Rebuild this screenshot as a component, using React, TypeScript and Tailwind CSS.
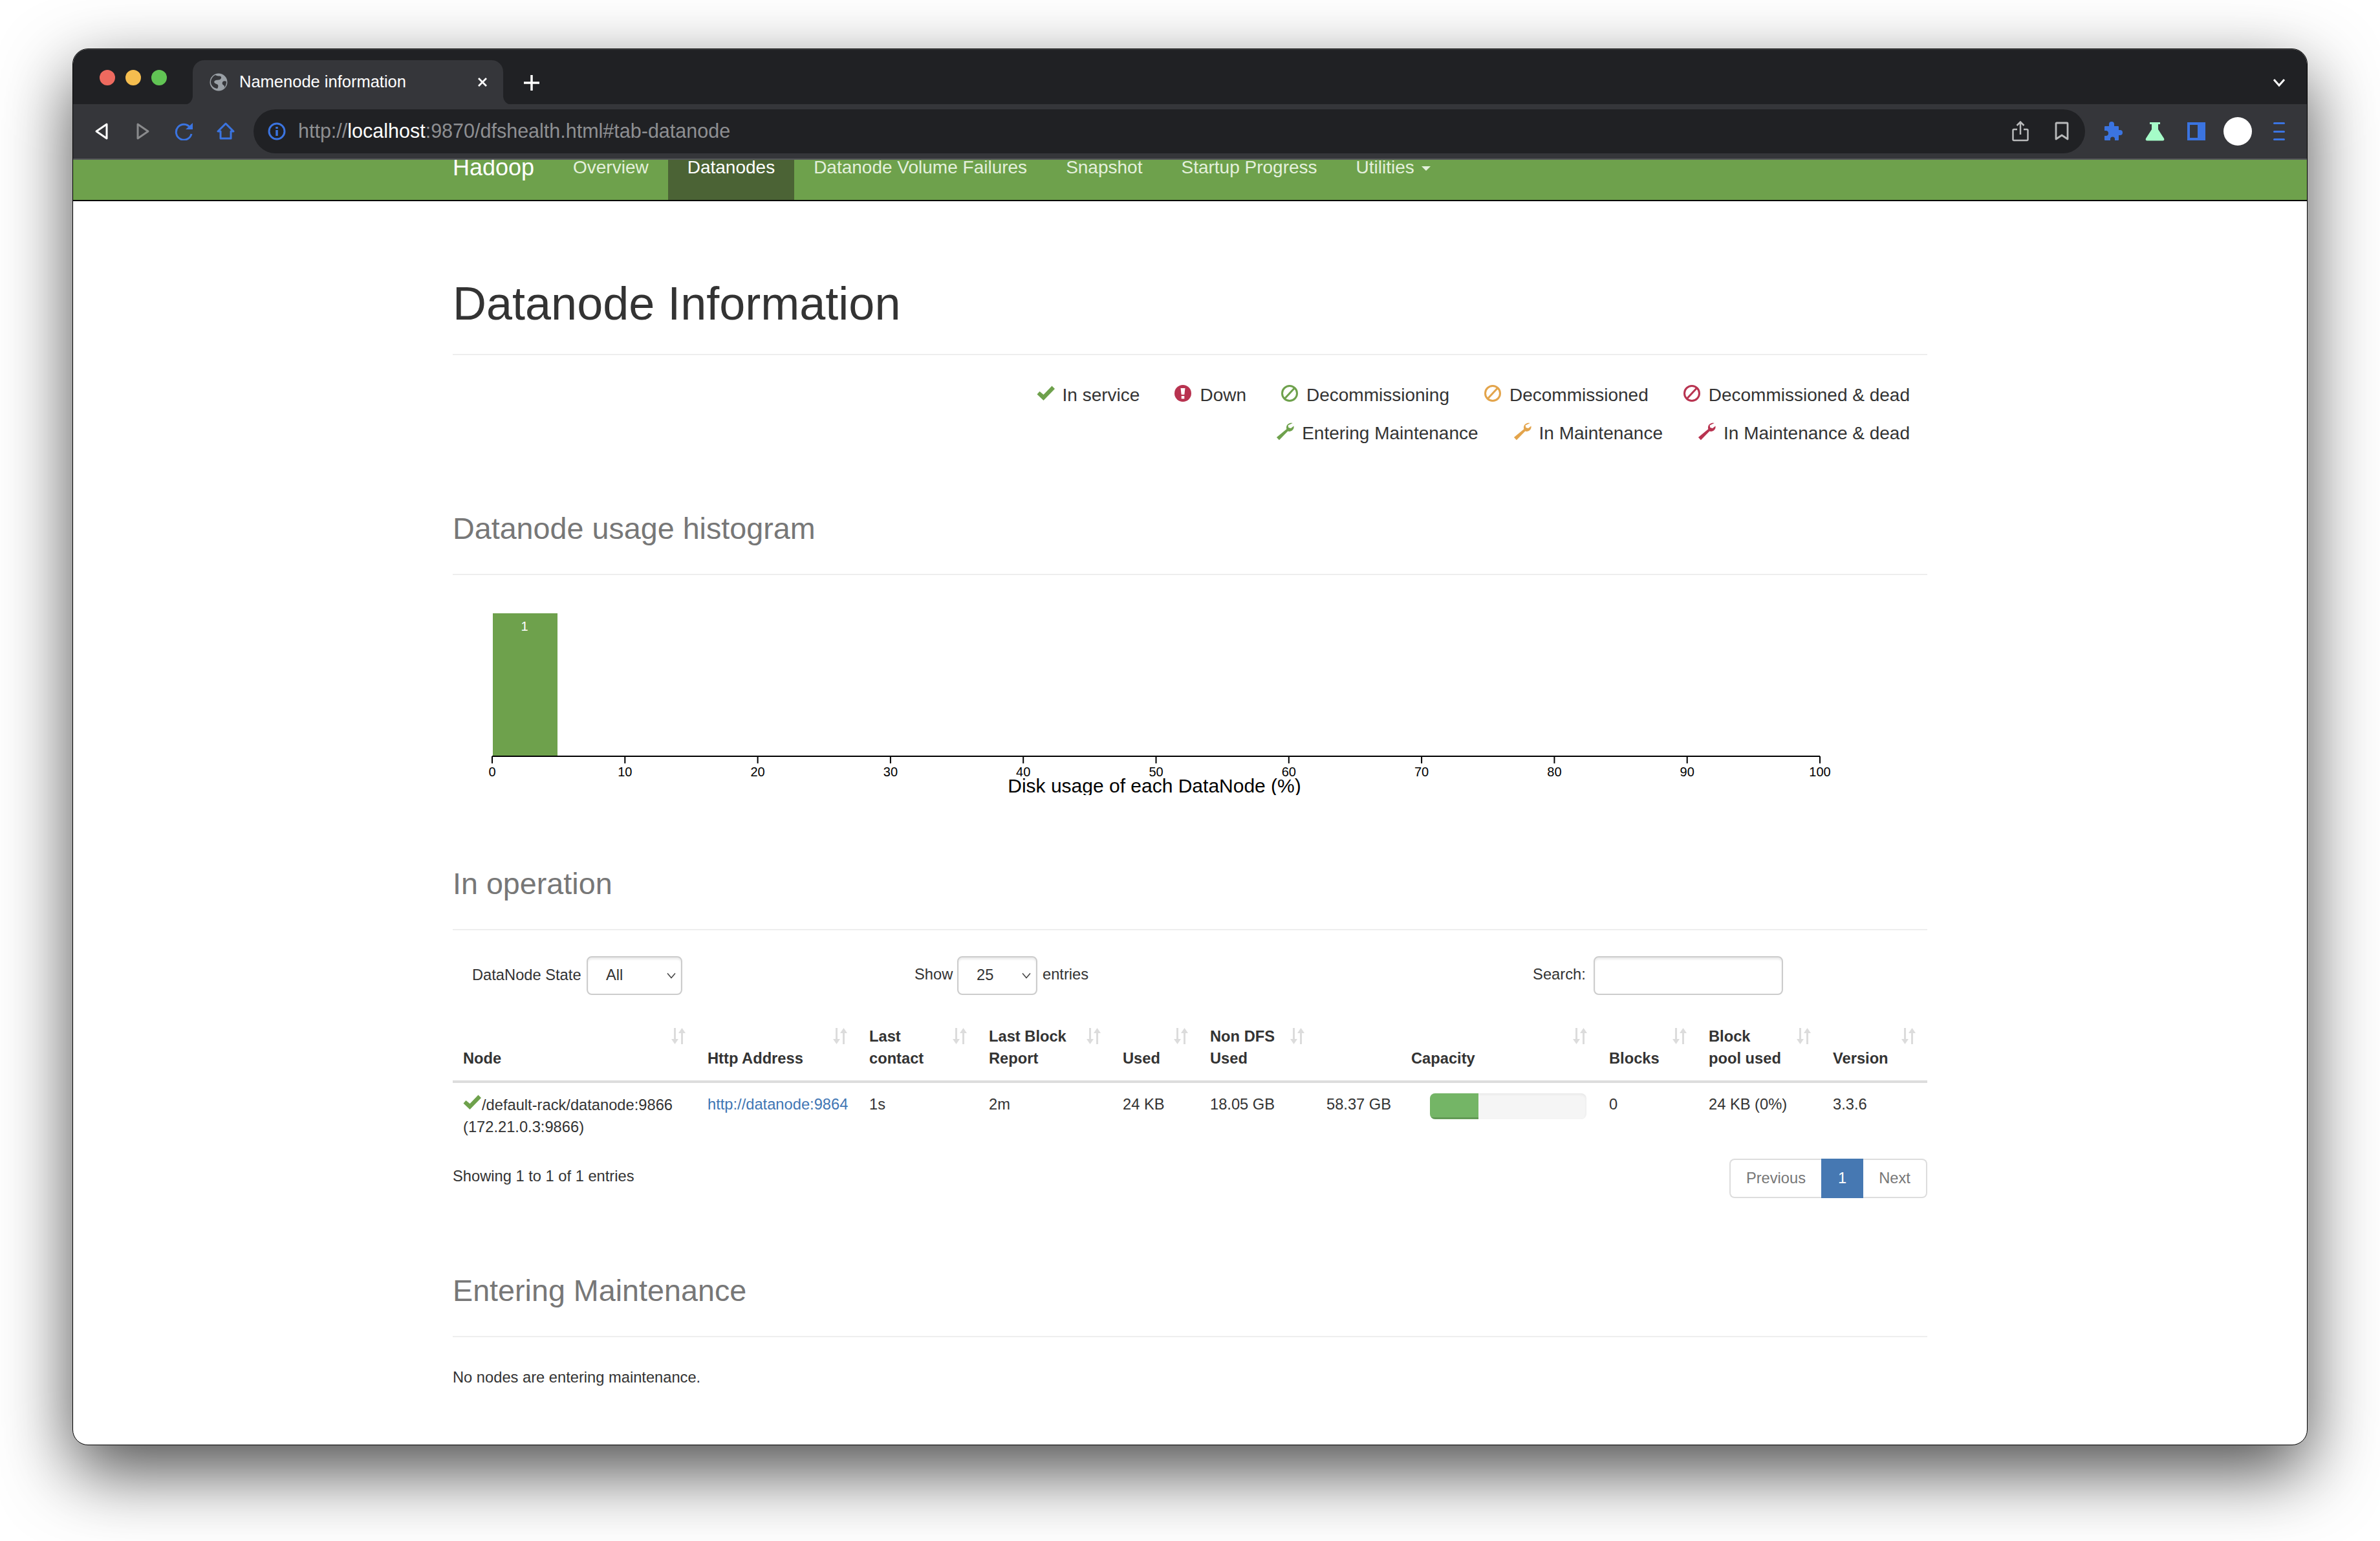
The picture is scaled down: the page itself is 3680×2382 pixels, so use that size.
import type { ReactNode } from 'react';

const GREEN = '#6ea14c';
const ORANGE = '#e3a44b';
const RED = '#b83350';

function Check({ color = GREEN, size = 28 }: { color?: string; size?: number }) {
  return (
    <svg width={size} height={size} viewBox="0 0 28 24" className="shrink-0">
      <path d="M.5 13.500 4.500 9 10.500 14 23.500.5 28 5 10.500 23z" fill={color} />
    </svg>
  );
}

function Exclamation({ color }: { color: string }) {
  return (
    <svg width="28" height="28" viewBox="0 0 28 28" className="shrink-0">
      <circle cx="14" cy="14" r="13" fill={color} />
      <path d="M10.500 6h7l-1.200 10h-4.600z" fill="#fff" />
      <rect x="11.700" y="18" width="4.600" height="4.400" fill="#fff" />
    </svg>
  );
}

function Ban({ color }: { color: string }) {
  return (
    <svg width="28" height="28" viewBox="0 0 28 28" className="shrink-0">
      <circle cx="14" cy="14" r="11.500" fill="none" stroke={color} strokeWidth="3" />
      <path d="M21 6.500 7 21.500" stroke={color} strokeWidth="3" />
    </svg>
  );
}

function Wrench({ color }: { color: string }) {
  return (
    <svg width="28" height="28" viewBox="0 0 24 24" className="shrink-0">
      <path
        d="M22 .8c-3.800-.9-7.600 1.300-8.200 5-.2 1-.1 2 .2 2.900L.8 19.800 4.200 23.400 15.700 11.600c3.300 1.100 7-.9 7.800-4.300.2-.9.2-1.800 0-2.600l-3.800 3-3.100-.9-.7-3z"
        fill={color}
      />
    </svg>
  );
}

function SortArrows() {
  return (
    <svg width="24" height="25" viewBox="0 0 24 25" className="absolute top-[20px] right-[17px]">
      <path d="M5 0h3v17h4l-5.500 8L1 17h4z" fill="#dcdcdc" />
      <path d="M16 25h3V8h4L17.500 0 12 8h4z" fill="#dcdcdc" />
    </svg>
  );
}

function Chevron() {
  return (
    <svg width="14" height="10" viewBox="0 0 14 10" className="shrink-0">
      <path d="M1 1.500 7 8.500 13 1.500" fill="none" stroke="#444" strokeWidth="1.500" />
    </svg>
  );
}

function Cell({ children }: { children: ReactNode }) {
  return <div className="flex h-[64px] w-[64px] shrink-0 items-center justify-center">{children}</div>;
}

function TrafficLights() {
  return (
    <div className="mt-[31px] flex gap-[16px] pl-[41px]">
      <div className="h-[24px] w-[24px] rounded-full bg-[#ee6a5f]" />
      <div className="h-[24px] w-[24px] rounded-full bg-[#f5bd4f]" />
      <div className="h-[24px] w-[24px] rounded-full bg-[#61c454]" />
    </div>
  );
}

function BrowserTab() {
  return (
    <div className="relative mt-[16px] ml-[40px] flex h-[69px] w-[480px] items-center rounded-t-[18px] bg-[#35363a] pb-[2px] pl-[26px] text-[25.500px] text-white">
      <svg width="28" height="28" viewBox="0 0 28 28" className="absolute bottom-0 -left-[14px]">
        <path d="M14 14C14 21 9 28 0 28H14z" fill="#35363a" />
      </svg>
      <svg width="28" height="28" viewBox="0 0 28 28" className="absolute -right-[14px] bottom-0">
        <path d="M14 14C14 21 19 28 28 28H14z" fill="#35363a" />
      </svg>
      <svg width="28" height="28" viewBox="0 0 28 28" className="shrink-0">
        <circle cx="14" cy="14" r="13.500" fill="#9aa0a6" />
        <path
          d="M9 3c3 2 6 1 8 2s1 4-1 5-6 0-8 2 0 4 3 5 3 4 1 7c-6-1-10-5-10-10 0-5 3-9 7-11zM26 13c-2-1-5-1-6 1s0 4 2 5 1 4-1 5c3-2 5-6 5-11z"
          fill="#35363a"
        />
      </svg>
      <span className="ml-[18px]">Namenode information</span>
      <svg width="16" height="16" viewBox="0 0 16 16" className="absolute top-[26px] right-[24px]">
        <path d="M2 2 14 14M14 2 2 14" stroke="#fff" strokeWidth="2.800" />
      </svg>
    </div>
  );
}

function TabStrip() {
  return (
    <div className="flex h-[85px] shrink-0 items-start border-t border-[#47484b] bg-[#202124]">
      <TrafficLights />
      <BrowserTab />
      <svg width="26" height="26" viewBox="0 0 26 26" className="mt-[38px] ml-[31px]">
        <path d="M13 1v24M1 13h24" stroke="#fff" strokeWidth="3.500" />
      </svg>
      <svg width="20" height="14" viewBox="0 0 20 14" className="mt-[44px] mr-[33px] ml-auto">
        <path d="M2 2 10 11 18 2" fill="none" stroke="#fff" strokeWidth="3" />
      </svg>
    </div>
  );
}

function Toolbar() {
  return (
    <div className="flex h-[86px] shrink-0 items-center border-b-[2px] border-[#55565a] bg-[#35363a] pr-[11px] pl-[12px]">
      <Cell>
        <svg width="22" height="28" viewBox="0 0 22 28">
          <path d="M19 3 3 14l16 11z" fill="none" stroke="#fff" strokeWidth="3" strokeLinejoin="round" />
        </svg>
      </Cell>
      <Cell>
        <svg width="22" height="28" viewBox="0 0 22 28">
          <path d="M3 3 19 14 3 25z" fill="none" stroke="#8a8b8d" strokeWidth="3" strokeLinejoin="round" />
        </svg>
      </Cell>
      <Cell>
        <svg width="30" height="28" viewBox="0 0 30 28">
          <path d="M24 8a12 12 0 1 0 2 10" fill="none" stroke="#3b74e0" strokeWidth="3" />
          <path d="M17 11h11V1z" fill="#3b74e0" />
        </svg>
      </Cell>
      <Cell>
        <svg width="28" height="28" viewBox="0 0 28 28">
          <path d="M14 2 2 14h4v11h16V14h4z" fill="none" stroke="#3b74e0" strokeWidth="3" strokeLinejoin="round" />
        </svg>
      </Cell>
      <div className="ml-[11px] flex h-[68px] min-w-0 flex-1 items-center rounded-full bg-[#202124] pl-[22px] text-[30.500px] text-[#8e8f92]">
        <svg width="28" height="28" viewBox="0 0 28 28" className="shrink-0">
          <circle cx="14" cy="14" r="12" fill="none" stroke="#3b74e0" strokeWidth="3" />
          <path d="M14 12v9M14 7v3" stroke="#3b74e0" strokeWidth="3.500" />
        </svg>
        <span className="ml-[19px]">
          http://<span className="text-white">localhost</span>:9870/dfshealth.html#tab-datanode
        </span>
        <div className="mr-[4px] ml-auto flex">
          <Cell>
            <svg width="26" height="32" viewBox="0 0 26 32">
              <path
                d="M8 13H3a1.500 1.500 0 0 0-1.500 1.500v14A1.500 1.500 0 0 0 3 30h20a1.500 1.500 0 0 0 1.500-1.500v-14A1.500 1.500 0 0 0 23 13h-5M13 21V2M7.500 7 13 1.500 18.500 7"
                fill="none"
                stroke="#b9babb"
                strokeWidth="2.500"
              />
            </svg>
          </Cell>
          <Cell>
            <svg width="22" height="30" viewBox="0 0 22 30">
              <path
                d="M3 2h16a1 1 0 0 1 1 1v24l-9-6-9 6V3a1 1 0 0 1 1-1z"
                fill="none"
                stroke="#b9babb"
                strokeWidth="2.800"
                strokeLinejoin="round"
              />
            </svg>
          </Cell>
        </div>
      </div>
      <div className="ml-[12px] flex">
        <Cell>
          <svg width="30" height="30" viewBox="0 0 30 30">
            <path
              d="M1 8a1 1 0 0 1 1-1h6V4a4 4 0 0 1 8 0v3h6a1 1 0 0 1 1 1v5h2a4 4 0 0 1 0 8h-2v7a1 1 0 0 1-1 1h-5v-2a3.500 3.500 0 0 0-7 0v2H2a1 1 0 0 1-1-1v-6h2a4 4 0 0 0 0-8H1z"
              fill="#3b74e0"
            />
          </svg>
        </Cell>
        <Cell>
          <svg width="30" height="30" viewBox="0 0 30 30">
            <path d="M7 1h16v3h-3v8l9 14c1 2 0 3.500-2 3.500H3c-2 0-3-1.500-2-3.500l9-14V4H7z" fill="#a5fcc8" />
          </svg>
        </Cell>
        <Cell>
          <div className="flex h-[28px] w-[28px] border-[4px] border-r-[12px] border-[#3b74e0]" />
        </Cell>
        <Cell>
          <div className="h-[44px] w-[44px] rounded-full bg-white" />
        </Cell>
        <Cell>
          <div className="flex h-[28px] w-[18px] flex-col justify-between">
            <div className="h-[3px] rounded-full bg-[#3b74e0]" />
            <div className="h-[3px] rounded-full bg-[#3b74e0]" />
            <div className="h-[3px] rounded-full bg-[#3b74e0]" />
          </div>
        </Cell>
      </div>
    </div>
  );
}

function NavBar() {
  const links = ['Overview', 'Datanodes', 'Datanode Volume Failures', 'Snapshot', 'Startup Progress'];
  return (
    <div className="flex h-[64px] shrink-0 items-start overflow-hidden border-b-[2px] border-black bg-[#6ea14c] pl-[587px] text-[28px] leading-[24px] text-[#e4f0dc]">
      <span className="mt-[-3px] w-[156px] text-[36px] leading-[30px] text-white">Hadoop</span>
      {links.map((l) =>
        l === 'Datanodes' ? (
          <div key={l} className="h-[62px] bg-[#4b6335] px-[30px] text-white">
            {l}
          </div>
        ) : (
          <div key={l} className="h-[62px] px-[30px]">
            {l}
          </div>
        ),
      )}
      <div className="flex h-[62px] px-[30px]">
        Utilities
        <div className="mt-[10px] ml-[11px] h-0 w-0 border-x-[7px] border-t-[7px] border-x-transparent border-t-[#e4f0dc]" />
      </div>
    </div>
  );
}

function LegendItem({ icon, label }: { icon: ReactNode; label: string }) {
  return (
    <div className="flex items-center">
      <div className="mt-[-6px] flex w-[40px]">{icon}</div>
      {label}
    </div>
  );
}

function Legend() {
  return (
    <div className="mt-[42px] flex flex-col gap-[19px] pr-[27px] text-[28px] leading-[40px] text-[#333]">
      <div className="flex justify-end gap-[53px]">
        <LegendItem icon={<Check />} label="In service" />
        <LegendItem icon={<Exclamation color={RED} />} label="Down" />
        <LegendItem icon={<Ban color={GREEN} />} label="Decommissioning" />
        <LegendItem icon={<Ban color={ORANGE} />} label="Decommissioned" />
        <LegendItem icon={<Ban color={RED} />} label="Decommissioned & dead" />
      </div>
      <div className="flex justify-end gap-[54px]">
        <LegendItem icon={<Wrench color={GREEN} />} label="Entering Maintenance" />
        <LegendItem icon={<Wrench color={ORANGE} />} label="In Maintenance" />
        <LegendItem icon={<Wrench color={RED} />} label="In Maintenance & dead" />
      </div>
    </div>
  );
}

function SectionTitle({ children, className }: { children: ReactNode; className: string }) {
  return (
    <h2 className={`${className} border-b-[2px] border-[#eee] pb-[43px] text-[46.700px] leading-[54px] text-[#777]`}>
      {children}
    </h2>
  );
}

function Histogram() {
  const ticks = [0, 10, 20, 30, 40, 50, 60, 70, 80, 90, 100];
  return (
    <svg width="2280" height="340" viewBox="0 0 2280 340" className="block">
      <rect x="62" y="59" width="100" height="220" fill={GREEN} />
      <text x="111" y="86" textAnchor="middle" fontSize="20" fill="#fff">
        1
      </text>
      <path d="M61 280H2114" stroke="#000" strokeWidth="2" />
      {ticks.map((t) => (
        <g key={t}>
          <path d={`M${61 + t * 20.53} 280v11`} stroke="#000" strokeWidth="2" />
          <text x={61 + t * 20.53} y="311" textAnchor="middle" fontSize="20" fill="#000">
            {t}
          </text>
        </g>
      ))}
      <text x="1085" y="336" textAnchor="middle" fontSize="30" fill="#000">
        Disk usage of each DataNode (%)
      </text>
    </svg>
  );
}

function FakeSelect({ label, width }: { label: string; width: string }) {
  return (
    <div
      className={`${width} flex h-[60px] items-center justify-between rounded-[8px] border-[2px] border-[#ccc] pr-[8px] pl-[28px] shadow-[inset_0_3px_3px_rgba(0,0,0,0.08)]`}
    >
      <span>{label}</span>
      <Chevron />
    </div>
  );
}

function Filters() {
  return (
    <div className="mt-[40px] flex h-[60px] items-center text-[23.700px] text-[#333]">
      <span className="ml-[30px] w-[177px]">DataNode State</span>
      <FakeSelect label="All" width="w-[148px]" />
      <span className="ml-[359px] w-[66px] -translate-y-[1px]">Show</span>
      <FakeSelect label="25" width="w-[124px]" />
      <span className="ml-[8px] -translate-y-[1px]">entries</span>
      <span className="ml-[687px] w-[94px] -translate-y-[1px]">Search:</span>
      <div className="h-[60px] w-[293px] rounded-[8px] border-[2px] border-[#ccc] shadow-[inset_0_3px_3px_rgba(0,0,0,0.08)]" />
    </div>
  );
}

function HeadCell({ children, className = '' }: { children?: ReactNode; className?: string }) {
  return (
    <th
      className={`relative border-b-[4px] border-[#ddd] px-[16px] pt-[16px] pb-[16px] text-left align-bottom font-bold ${className}`}
    >
      {children}
      <SortArrows />
    </th>
  );
}

function NodesTable() {
  return (
    <table className="mt-[31px] w-[2280px] table-fixed border-collapse text-[23.700px] leading-[34.280px] text-[#333]">
      <colgroup>
        <col className="w-[378px]" />
        <col className="w-[250px]" />
        <col className="w-[185px]" />
        <col className="w-[207px]" />
        <col className="w-[135px]" />
        <col className="w-[180px]" />
        <col className="w-[160px]" />
        <col className="w-[277px]" />
        <col className="w-[154px]" />
        <col className="w-[192px]" />
        <col className="w-[162px]" />
      </colgroup>
      <thead>
        <tr>
          <HeadCell>Node</HeadCell>
          <HeadCell>Http Address</HeadCell>
          <HeadCell>
            Last
            <br />
            contact
          </HeadCell>
          <HeadCell>
            Last Block
            <br />
            Report
          </HeadCell>
          <HeadCell>Used</HeadCell>
          <HeadCell>
            Non DFS
            <br />
            Used
          </HeadCell>
          <th
            className="relative border-b-[4px] border-[#ddd] pt-[16px] pb-[16px] pl-[147px] text-left align-bottom font-bold"
            colSpan={2}
          >
            Capacity
            <SortArrows />
          </th>
          <HeadCell>Blocks</HeadCell>
          <HeadCell>
            Block
            <br />
            pool used
          </HeadCell>
          <HeadCell>Version</HeadCell>
        </tr>
      </thead>
      <tbody>
        <tr className="align-top">
          <td className="px-[16px] py-[16px]">
            <span className="inline-block w-[29px] align-[-2px]">
              <Check size={28} />
            </span>
            /default-rack/datanode:9866
            <br />
            (172.21.0.3:9866)
          </td>
          <td className="px-[16px] py-[16px] text-[#3f76b4]">http://datanode:9864</td>
          <td className="px-[16px] py-[16px]">1s</td>
          <td className="px-[16px] py-[16px]">2m</td>
          <td className="px-[16px] py-[16px]">24 KB</td>
          <td className="px-[16px] py-[16px]">18.05 GB</td>
          <td className="px-[16px] py-[16px]">58.37 GB</td>
          <td className="px-[16px] py-[16px]">
            <div className="h-[40px] w-[242px] overflow-hidden rounded-[8px] bg-[#f5f5f5] shadow-[inset_0_2px_4px_rgba(0,0,0,0.06)]">
              <div className="h-full w-[75px] bg-[#74b566] shadow-[inset_0_-3px_0_rgba(0,0,0,0.15)]" />
            </div>
          </td>
          <td className="px-[16px] py-[16px]">0</td>
          <td className="px-[16px] py-[16px]">24 KB (0%)</td>
          <td className="px-[16px] py-[16px]">3.3.6</td>
        </tr>
      </tbody>
    </table>
  );
}

function Pagination() {
  return (
    <div className="mt-[16px] flex items-start justify-between text-[23.700px] text-[#333]">
      <div className="mt-[10px]">Showing 1 to 1 of 1 entries</div>
      <div className="flex h-[61px] text-[#777]">
        <div className="flex w-[142px] items-center justify-center rounded-l-[8px] border-[2px] border-r-0 border-[#ddd]">
          Previous
        </div>
        <div className="flex w-[65px] items-center justify-center bg-[#4678b2] text-white">1</div>
        <div className="flex w-[99px] items-center justify-center rounded-r-[8px] border-[2px] border-l-0 border-[#ddd]">
          Next
        </div>
      </div>
    </div>
  );
}

export default function App() {
  return (
    <div className="h-[2382px] w-[3680px] overflow-hidden bg-white pt-[75px] pl-[112px] font-['Liberation_Sans',Arial,sans-serif]">
      <div className="flex h-[2159px] w-[3456px] flex-col overflow-hidden rounded-[24px] border border-black bg-white shadow-[0_40px_110px_rgba(0,0,0,0.7)]">
        <TabStrip />
        <Toolbar />
        <NavBar />
        <div className="ml-[587px] w-[2280px]">
          <h1 className="mt-[118px] border-b-[2px] border-[#eee] pb-[38px] text-[72px] leading-[80px] text-[#333]">
            Datanode Information
          </h1>
          <Legend />
          <SectionTitle className="mt-[100px]">Datanode usage histogram</SectionTitle>
          <Histogram />
          <SectionTitle className="mt-[110px]">In operation</SectionTitle>
          <Filters />
          <NodesTable />
          <Pagination />
          <SectionTitle className="mt-[116px]">Entering Maintenance</SectionTitle>
          <p className="mt-[45px] text-[23.700px] leading-[34px] text-[#333]">No nodes are entering maintenance.</p>
        </div>
      </div>
    </div>
  );
}
